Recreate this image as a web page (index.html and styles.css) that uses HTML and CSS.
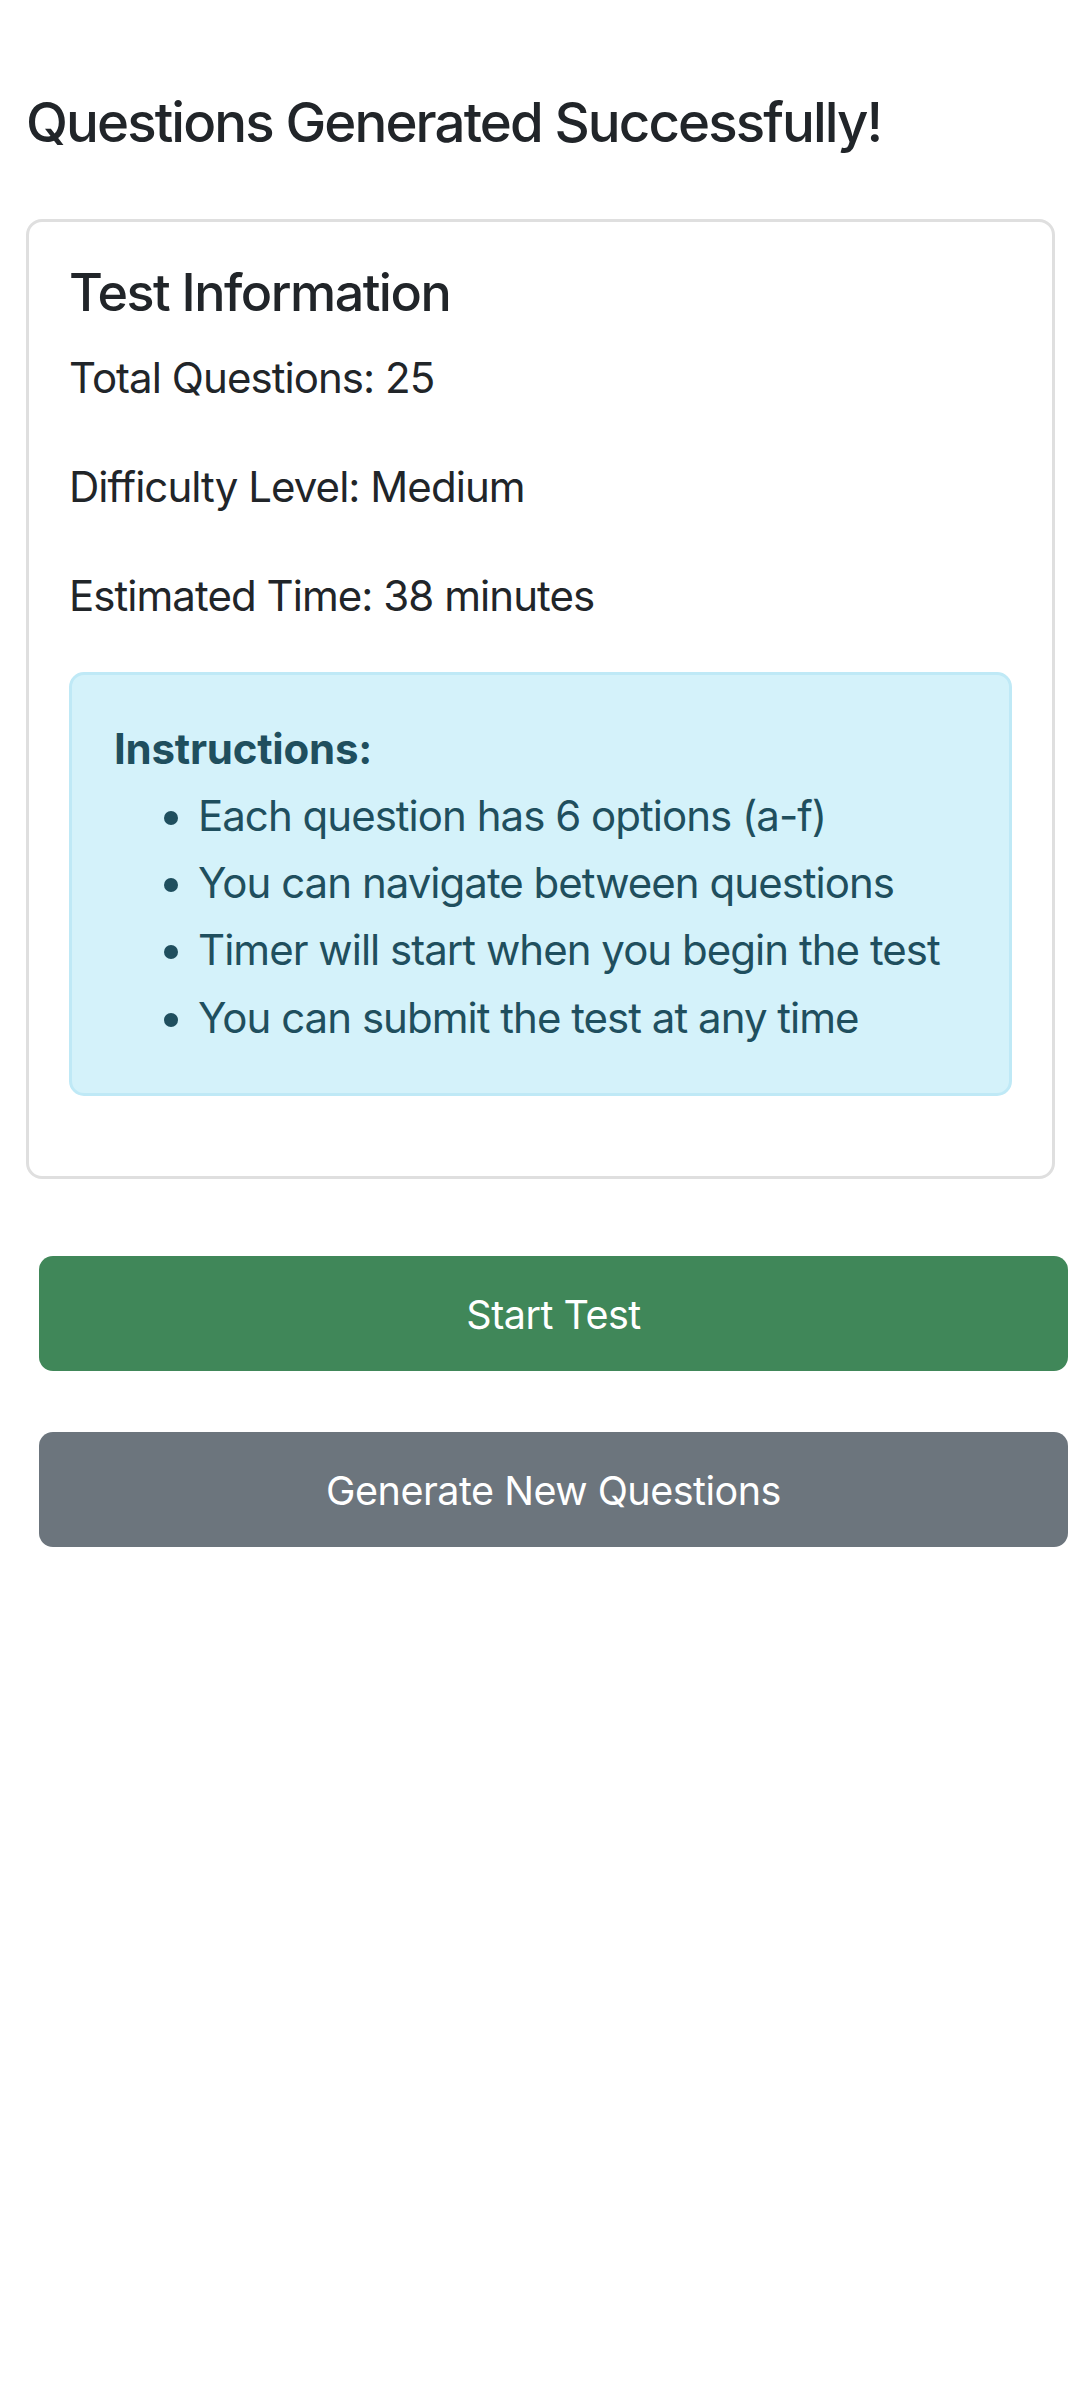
FILE: index.html
```html
<!DOCTYPE html>
<html lang="en">
<head>
<meta charset="utf-8">
<title>Questions Generated Successfully!</title>
<link rel="stylesheet" href="styles.css">
</head>
<body>
<main class="page">
  <h1 class="page-title">Questions Generated Successfully!</h1>
  <section class="card">
    <h2 class="card-title">Test Information</h2>
    <p class="info-line">Total Questions: 25</p>
    <p class="info-line">Difficulty Level: Medium</p>
    <p class="info-line">Estimated Time: 38 minutes</p>
    <div class="alert">
      <strong class="alert-heading">Instructions:</strong>
      <ul class="alert-list">
        <li>Each question has 6 options (a-f)</li>
        <li>You can navigate between questions</li>
        <li>Timer will start when you begin the test</li>
        <li>You can submit the test at any time</li>
      </ul>
    </div>
  </section>
  <div class="actions">
    <button class="btn btn-success" type="button">Start Test</button>
    <button class="btn btn-secondary" type="button">Generate New Questions</button>
  </div>
</main>
</body>
</html>
```

FILE: styles.css
```css
* {
  box-sizing: border-box;
}

html, body {
  margin: 0;
  padding: 0;
  background: #ffffff;
}

body {
  font-family: Inter, "Liberation Sans", Arial, sans-serif;
  color: #212529;
}

.page {
  padding: 90px 27px 0 26px;
}

.page-title {
  margin: 0 0 63px;
  font-size: 54.6px;
  line-height: 65.5px;
  font-weight: 500;
  letter-spacing: -1.9px;
  color: #212529;
}

.card {
  width: 1029px;
  border: 3px solid #dfdfdf;
  border-radius: 16px;
  padding: 40px;
  background: #ffffff;
}

.card-title {
  margin: 0 0 20px;
  font-size: 52px;
  line-height: 62.4px;
  font-weight: 500;
  letter-spacing: -1.5px;
  color: #212529;
}

.info-line {
  margin: 0 0 42px;
  font-size: 42px;
  line-height: 67.25px;
  letter-spacing: -0.95px;
}

.alert {
  margin: 0 0 40px;
  padding: 40px 42px 42px 42px;
  background: #d4f2fa;
  border: 3px solid #bfe9f6;
  border-radius: 15px;
  color: #1f4f5e;
  font-size: 42px;
  line-height: 67.25px;
  letter-spacing: -0.98px;
}

.alert-heading {
  display: block;
  font-weight: 700;
  letter-spacing: -0.23px;
}

.alert-list {
  margin: 0;
  padding-left: 84px;
}

.actions {
  display: flex;
  flex-direction: column;
  gap: 61px;
  width: 1029px;
  margin: 77px 0 0 13px;
}

.btn {
  display: flex;
  align-items: center;
  justify-content: center;
  height: 115px;
  width: 100%;
  padding: 4px 0 0;
  border: 0;
  border-radius: 14px;
  font-family: Inter, "Liberation Sans", Arial, sans-serif;
  font-size: 39.5px;
  font-weight: 400;
  letter-spacing: -0.5px;
  color: #ffffff;
  cursor: pointer;
}

.btn-success {
  background: #408759;
}

.btn-secondary {
  background: #6c757d;
}
```
